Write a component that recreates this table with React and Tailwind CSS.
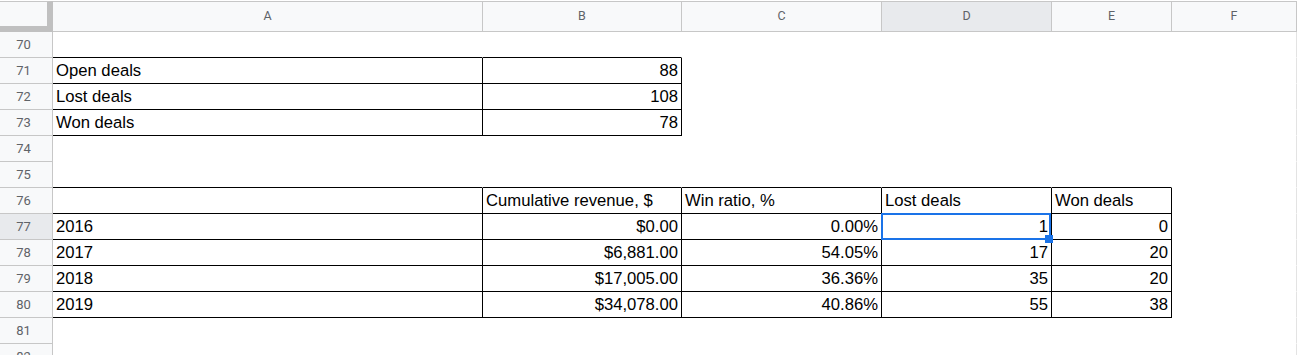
import React from "react";

const COLS = ["A", "B", "C", "D", "E", "F"];
const ROWS = [70, 71, 72, 73, 74, 75, 76, 77, 78, 79, 80, 81, 82];

const DATA = {
  71: { A: "Open deals", B: "88" },
  72: { A: "Lost deals", B: "108" },
  73: { A: "Won deals", B: "78" },
  76: { B: "Cumulative revenue, $", C: "Win ratio, %", D: "Lost deals", E: "Won deals" },
  77: { A: "2016", B: "$0.00", C: "0.00%", D: "1", E: "0" },
  78: { A: "2017", B: "$6,881.00", C: "54.05%", D: "17", E: "20" },
  79: { A: "2018", B: "$17,005.00", C: "36.36%", D: "35", E: "20" },
  80: { A: "2019", B: "$34,078.00", C: "40.86%", D: "55", E: "38" },
};

const LEFT_TEXT = new Set(["76B", "76C", "76D", "76E"]);

function inTable(r, c) {
  if (r >= 71 && r <= 73 && (c === "A" || c === "B")) return true;
  if (r >= 76 && r <= 80 && ["A", "B", "C", "D", "E"].includes(c)) return true;
  return false;
}

function Cell({ r, c }) {
  const t = inTable(r, c);
  const below = inTable(r + 1, c);
  const value = DATA[r] && DATA[r][c];
  const left = c === "A" || LEFT_TEXT.has(`${r}${c}`);
  const selected = r === 77 && c === "D";
  const rightCls = t
    ? "border-r-black"
    : c === "F"
    ? "border-r-[#e3e3e3]"
    : "border-r-white";
  const bottomCls = t || below ? "border-b-black" : "border-b-white";
  return (
    <div
      className={`relative h-[26px] border-r border-b ${rightCls} ${bottomCls} bg-white flex items-end pb-[3px] whitespace-nowrap ${
        left ? "justify-start pl-[3px]" : "justify-end pr-[3px]"
      } ${selected ? "z-10" : ""}`}
    >
      {value && (
        <span className="text-[16.67px] leading-none text-black">{value}</span>
      )}
      {selected && (
        <>
          <div className="absolute left-[-1px] top-[-1px] w-[170px] h-[27px] border-2 border-[#1a73e8] pointer-events-none" />
          <div className="absolute left-[163px] top-[21px] w-[8px] h-[8px] bg-[#1a73e8]" />
        </>
      )}
    </div>
  );
}

export default function App() {
  return (
    <div
      className="w-[1298px] h-[355px] overflow-hidden bg-white pt-px"
      style={{ fontFamily: "'Liberation Sans', Arial, sans-serif" }}
    >
      <div className="grid grid-cols-[53px_430px_199px_200px_170px_120px_125px_1fr]">
        <div className="h-[31px] bg-[#f8f9fa] border-t border-t-[#c7c7c7] border-r-[6px] border-b-[6px] border-[#c0c0c0]" />
        {COLS.map((c) => (
          <div
            key={c}
            className={`h-[31px] flex items-center justify-center border-t border-t-[#c7c7c7] border-r border-b border-r-[#c7c7c7] border-b-[#c7c7c7] ${
              c === "D" ? "bg-[#e8eaed]" : "bg-[#f8f9fa]"
            } text-[12.5px] text-[#5f6368]`}
            style={{ fontFamily: "Roboto, 'Liberation Sans', sans-serif" }}
          >
            {c}
          </div>
        ))}
        <div className="h-[31px] bg-white" />

        {ROWS.map((r) => (
          <React.Fragment key={r}>
            <div
              className={`h-[26px] flex items-center justify-center pr-[5px] border-r border-b border-r-[#c7c7c7] border-b-[#c7c7c7] ${
                r === 77 ? "bg-[#e8eaed]" : "bg-[#f8f9fa]"
              } text-[13px] text-[#5f6368]`}
              style={{ fontFamily: "Roboto, 'Liberation Sans', sans-serif" }}
            >
              {r}
            </div>
            {COLS.map((c) => (
              <Cell key={c} r={r} c={c} />
            ))}
            <div className="h-[26px] bg-white" />
          </React.Fragment>
        ))}
      </div>
    </div>
  );
}
